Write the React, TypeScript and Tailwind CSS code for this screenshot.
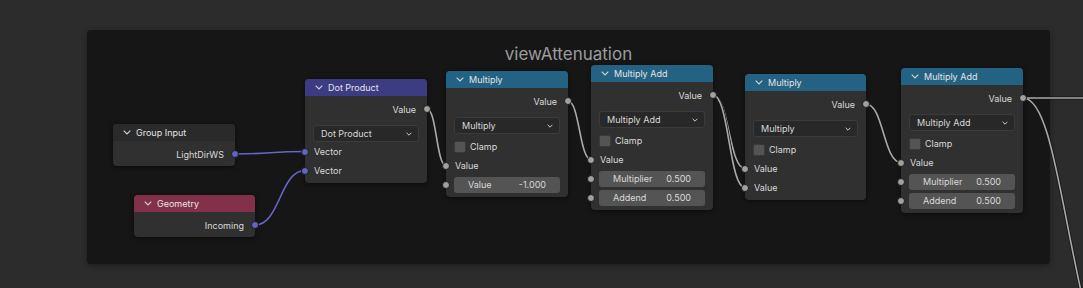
import React from 'react';

type Row =
  | { kind: 'out'; label: string; vec?: boolean }
  | { kind: 'in'; label: string; vec?: boolean }
  | { kind: 'select'; label: string }
  | { kind: 'clamp' }
  | { kind: 'field'; label: string; value: string };

type NodeDef = {
  id: string;
  title: string;
  pos: string;
  header: string;
  rows: Row[];
};

const mathRows = (op: string, inputs: Row[]): Row[] => [
  { kind: 'out', label: 'Value' },
  { kind: 'select', label: op },
  { kind: 'clamp' },
  ...inputs,
];

const maInputs: Row[] = [
  { kind: 'in', label: 'Value' },
  { kind: 'field', label: 'Multiplier', value: '0.500' },
  { kind: 'field', label: 'Addend', value: '0.500' },
];

const nodes: NodeDef[] = [
  {
    id: 'group-input',
    title: 'Group Input',
    pos: 'left-[113px] top-[124px] w-[122px]',
    header: 'bg-[#2a2a2a]',
    rows: [{ kind: 'out', label: 'LightDirWS', vec: true }],
  },
  {
    id: 'geometry',
    title: 'Geometry',
    pos: 'left-[134px] top-[195px] w-[121px]',
    header: 'bg-[#83314a]',
    rows: [{ kind: 'out', label: 'Incoming', vec: true }],
  },
  {
    id: 'dot',
    title: 'Dot Product',
    pos: 'left-[305px] top-[79px] w-[122px]',
    header: 'bg-[#3c3c83]',
    rows: [
      { kind: 'out', label: 'Value' },
      { kind: 'select', label: 'Dot Product' },
      { kind: 'in', label: 'Vector', vec: true },
      { kind: 'in', label: 'Vector', vec: true },
    ],
  },
  {
    id: 'mul1',
    title: 'Multiply',
    pos: 'left-[446px] top-[71px] w-[122px]',
    header: 'bg-[#246283]',
    rows: mathRows('Multiply', [
      { kind: 'in', label: 'Value' },
      { kind: 'field', label: 'Value', value: '-1.000' },
    ]),
  },
  {
    id: 'ma1',
    title: 'Multiply Add',
    pos: 'left-[591px] top-[65px] w-[122px]',
    header: 'bg-[#246283]',
    rows: mathRows('Multiply Add', maInputs),
  },
  {
    id: 'mul2',
    title: 'Multiply',
    pos: 'left-[745px] top-[74px] w-[121px]',
    header: 'bg-[#246283]',
    rows: mathRows('Multiply', [
      { kind: 'in', label: 'Value' },
      { kind: 'in', label: 'Value' },
    ]),
  },
  {
    id: 'ma2',
    title: 'Multiply Add',
    pos: 'left-[901px] top-[68px] w-[122px]',
    header: 'bg-[#246283]',
    rows: mathRows('Multiply Add', maInputs),
  },
];

// links: [x1, y1, x2, y2, isVector]
const links: [number, number, number, number, boolean][] = [
  [235, 154, 305, 151.5, true],
  [255, 225, 305, 170.5, true],
  [427, 109, 446, 165.5, false],
  [568, 101, 591, 159.5, false],
  [713, 95, 745, 168.5, false],
  [713, 95, 745, 187.5, false],
  [866, 104, 901, 162.5, false],
];

const bezier = (x1: number, y1: number, x2: number, y2: number) => {
  const d = Math.abs(x2 - x1) * 0.5;
  return `M${x1},${y1} C${x1 + d},${y1} ${x2 - d},${y2} ${x2},${y2}`;
};

const Socket = ({ side, vec }: { side: 'left' | 'right'; vec?: boolean }) => (
  <span
    className={`absolute top-1/2 -translate-y-1/2 w-[8px] h-[8px] rounded-full border border-[#1c1c1c] ${
      side === 'left' ? '-left-[4px]' : '-right-[4px]'
    } ${vec ? 'bg-[#6363c7]' : 'bg-[#a1a1a1]'}`}
  />
);

const HeaderChevron = () => (
  <svg width="8" height="5" viewBox="0 0 8 5" className="shrink-0">
    <polyline points="0.7,0.7 4,4 7.3,0.7" fill="none" stroke="#d4d4d4" strokeWidth="1.1" />
  </svg>
);

const SelectChevron = () => (
  <svg width="6" height="4" viewBox="0 0 6 4" className="shrink-0">
    <polyline points="0.6,0.8 3,3.2 5.4,0.8" fill="none" stroke="#cfcfcf" strokeWidth="1" />
  </svg>
);

const NodeRow = ({ row }: { row: Row }) => {
  switch (row.kind) {
    case 'out':
      return (
        <div className="relative h-[18px] flex items-center justify-end pr-[11px]">
          {row.label}
          <Socket side="right" vec={row.vec} />
        </div>
      );
    case 'in':
      return (
        <div className="relative h-[19px] flex items-center pl-[9px]">
          {row.label}
          <Socket side="left" vec={row.vec} />
        </div>
      );
    case 'select':
      return (
        <div className="mt-[7px] mx-[8px] h-[17px] rounded-[3px] bg-[#282828] border border-[#3b3b3b] flex items-center justify-between pl-[7px] pr-[6px]">
          <span>{row.label}</span>
          <SelectChevron />
        </div>
      );
    case 'clamp':
      return (
        <div className="mt-[3px] h-[19px] px-[8px] flex items-center gap-[4px]">
          <span className="w-[12px] h-[12px] rounded-[2px] bg-[#545454] border border-[#3a3a3a]" />
          Clamp
        </div>
      );
    case 'field':
      return (
        <div className="relative h-[19px] flex items-center px-[8px]">
          <div className="flex-1 h-[16px] rounded-[3px] bg-[#545454] flex items-center justify-between px-[14px]">
            <span>{row.label}</span>
            <span>{row.value}</span>
          </div>
          <Socket side="left" />
        </div>
      );
  }
};

const Node = ({ node }: { node: NodeDef }) => (
  <div
    className={`absolute ${node.pos} rounded-[4px] bg-[#303030] shadow-[0_1px_4px_rgba(0,0,0,0.55)] text-[9px] leading-none text-[#dadada]`}
  >
    <div className={`h-[17px] rounded-t-[4px] ${node.header} flex items-center pl-[10px] gap-[5px] text-[#e4e4e4]`}>
      <HeaderChevron />
      <span>{node.title}</span>
    </div>
    <div className="pt-[4px] pb-[3px]">
      {node.rows.map((r, i) => (
        <NodeRow key={i} row={r} />
      ))}
    </div>
  </div>
);

const App: React.FC = () => {
  return (
    <div className="relative w-[1083px] h-[288px] overflow-hidden bg-[#2c2c2c] font-['Inter',sans-serif]">
      {/* Frame */}
      <div className="absolute left-[87px] top-[30px] w-[963px] h-[234px] rounded-[4px] bg-[#161616] shadow-[0_2px_6px_rgba(0,0,0,0.35)]">
        <div className="pt-[14px] text-center text-[17px] leading-[20px] text-[#9c9c9c]">viewAttenuation</div>
      </div>

      {/* Links */}
      <svg className="absolute inset-0 pointer-events-none" width="1083" height="288">
        {links.map(([x1, y1, x2, y2, vec], i) => (
          <g key={i}>
            <path d={bezier(x1, y1, x2, y2)} fill="none" stroke="#151515" strokeWidth="3.2" />
            <path d={bezier(x1, y1, x2, y2)} fill="none" stroke={vec ? '#6767cb' : '#a9a9a9'} strokeWidth="1.6" />
          </g>
        ))}
        <path d="M1023,98 L1090,98" fill="none" stroke="#151515" strokeWidth="3.2" />
        <path d="M1023,98 C1050,98 1060,200 1083,300" fill="none" stroke="#151515" strokeWidth="3.2" />
        <path d="M1023,98 L1090,98" fill="none" stroke="#a9a9a9" strokeWidth="1.6" />
        <path d="M1023,98 C1050,98 1060,200 1083,300" fill="none" stroke="#a9a9a9" strokeWidth="1.6" />
      </svg>

      {/* Nodes */}
      {nodes.map(n => (
        <Node key={n.id} node={n} />
      ))}
    </div>
  );
};

export default App;
